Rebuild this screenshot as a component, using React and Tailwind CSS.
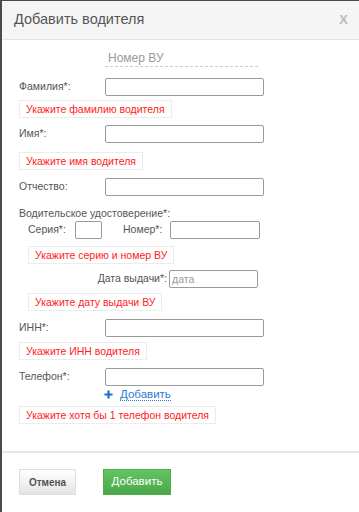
import React from 'react';

function ErrorBox({ text, className = '' }) {
  return (
    <div className={`self-start h-[18px] px-[6px] border border-[#ececec] text-[10.5px] leading-[16px] text-[#f22] ${className}`}>
      {text}
    </div>
  );
}

function Field({ label, className = '' }) {
  return (
    <div className={`flex items-center h-[18px] ${className}`}>
      <span className="w-[86px] text-[10.5px] text-[#555]">{label}</span>
      <input className="w-[159px] h-[18px] border border-[#9a9a9a] rounded-[2px] bg-white outline-none" />
    </div>
  );
}

export default function App() {
  return (
    <div className="w-[359px] h-[512px] bg-white border-l-2 border-t border-[#4a4a4a] flex flex-col overflow-hidden" style={{ fontFamily: '"Liberation Sans", Arial, sans-serif' }}>
      <div className="h-[39px] shrink-0 bg-[#f5f5f5] border-b border-[#e3e3e3] flex items-center justify-between pl-[12px] pr-[11px]">
        <h1 className="text-[14.5px] text-[#555]">Добавить водителя</h1>
        <span className="text-[13px] font-bold text-[#bbb]">X</span>
      </div>

      <div className="flex-1 flex flex-col pl-[17px]">
        <div className="mt-[11px] ml-[86px] w-[153px] h-[16px] border-b border-dashed border-[#ccc] pl-[3px] text-[12px] leading-[14px] text-[#999]">
          Номер ВУ
        </div>

        <Field label="Фамилия*:" className="mt-[11px]" />
        <ErrorBox text="Укажите фамилию водителя" className="mt-[4px]" />

        <Field label="Имя*:" className="mt-[7px]" />
        <ErrorBox text="Укажите имя водителя" className="mt-[9px]" />

        <Field label="Отчество:" className="mt-[8px]" />

        <div className="mt-[10px] text-[10.5px] leading-[14px] text-[#555]">Водительское удостоверение*:</div>
        <div className="flex items-center h-[18px] mt-[1px] pl-[9px] text-[10.5px] text-[#555]">
          <span className="w-[47px]">Серия*:</span>
          <input className="w-[27px] h-[18px] border border-[#9a9a9a] rounded-[2px] outline-none" />
          <span className="ml-[21px] w-[47px]">Номер*:</span>
          <input className="w-[90px] h-[18px] border border-[#9a9a9a] rounded-[2px] outline-none" />
        </div>
        <ErrorBox text="Укажите серию и номер ВУ" className="mt-[7px] ml-[9px]" />

        <div className="flex items-center h-[18px] mt-[6px] text-[10.5px] text-[#555]">
          <span className="w-[148px] text-right">Дата выдачи*:</span>
          <input placeholder="дата" className="ml-[2px] w-[89px] h-[18px] border border-[#9a9a9a] rounded-[2px] pl-[2px] text-[10.5px] placeholder:text-[#999] outline-none" />
        </div>
        <ErrorBox text="Укажите дату выдачи ВУ" className="mt-[5px] ml-[9px]" />

        <Field label="ИНН*:" className="mt-[8px]" />
        <ErrorBox text="Укажите ИНН водителя" className="mt-[5px]" />

        <Field label="Телефон*:" className="mt-[8px]" />
        <div className="mt-[2px] ml-[85px] flex items-center h-[12px] text-[11.5px] text-[#2a7bd0]">
          <svg width="9" height="9" viewBox="0 0 10 10" className="mr-[7px]">
            <path d="M5 0.5v9M0.5 5h9" stroke="#1f6fc5" strokeWidth="2.4" />
          </svg>
          <span className="border-b border-dotted border-[#2a7bd0] leading-[12px]">Добавить</span>
        </div>
        <ErrorBox text="Укажите хотя бы 1 телефон водителя" className="mt-[6px]" />
      </div>

      <div className="h-[61px] shrink-0 border-t-2 border-[#e8e8e8] flex items-start pt-[16px] pl-[17px] gap-[27px]">
        <button className="w-[57px] h-[26px] border border-[#ddd] bg-gradient-to-b from-white to-[#e4e4e4] text-[10px] font-bold text-[#555]">
          Отмена
        </button>
        <button className="w-[68px] h-[26px] border border-[#4cae4c] bg-gradient-to-b from-[#62c462] to-[#4aa84a] text-[11.5px] text-white">
          Добавить
        </button>
      </div>
    </div>
  );
}
